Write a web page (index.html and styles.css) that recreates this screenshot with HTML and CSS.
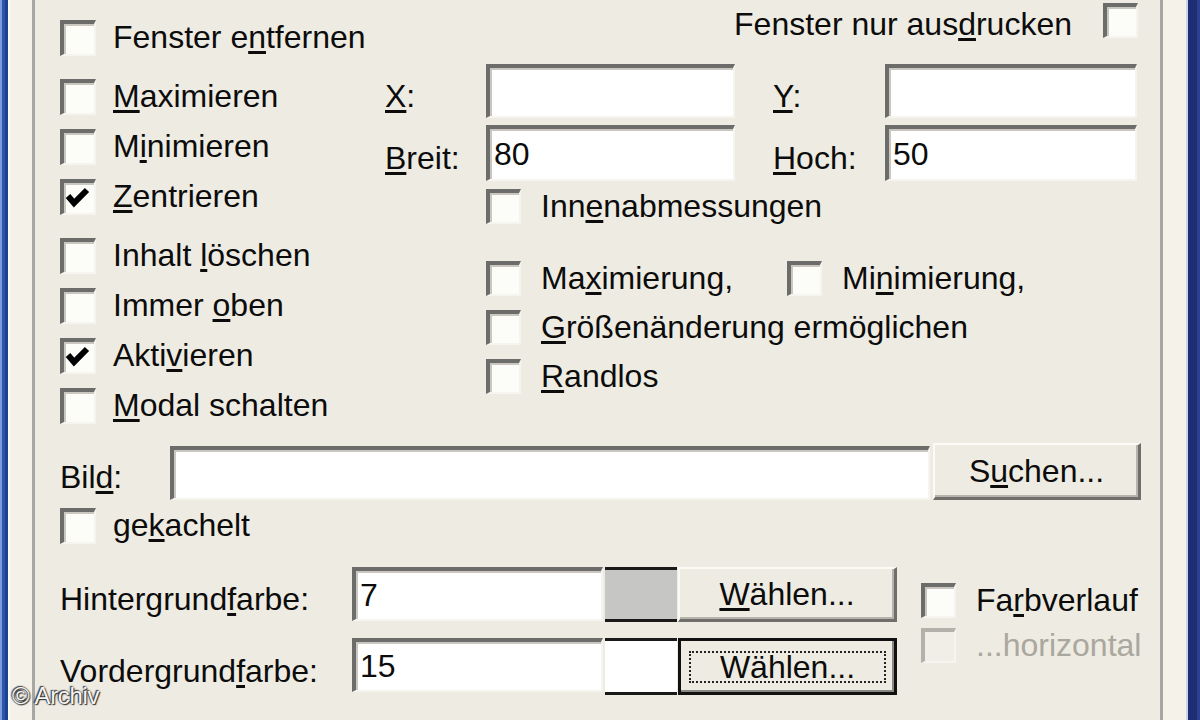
FILE: index.html
```html
<!DOCTYPE html>
<html lang="de">
<head>
<meta charset="utf-8">
<title>Fenster</title>
<link rel="stylesheet" href="styles.css">
</head>
<body>
<div class="window">
  <div class="frame-left"></div>
  <div class="dialog">
    <div class="top">
      <div class="col-left">
        <div class="cb"><span class="box"></span><span class="txt">Fenster e<u>n</u>tfernen</span></div>
        <div class="cb sep"><span class="box"></span><span class="txt"><u>M</u>aximieren</span></div>
        <div class="cb"><span class="box"></span><span class="txt">M<u>i</u>nimieren</span></div>
        <div class="cb"><span class="box"><svg class="check" viewBox="0 0 30 30"><polyline points="4,13 10,20 23,7"/></svg></span><span class="txt"><u>Z</u>entrieren</span></div>
        <div class="cb sep"><span class="box"></span><span class="txt">Inhalt <u>l</u>öschen</span></div>
        <div class="cb"><span class="box"></span><span class="txt">Immer <u>o</u>ben</span></div>
        <div class="cb"><span class="box"><svg class="check" viewBox="0 0 30 30"><polyline points="4,13 10,20 23,7"/></svg></span><span class="txt">Akti<u>v</u>ieren</span></div>
        <div class="cb"><span class="box"></span><span class="txt"><u>M</u>odal schalten</span></div>
      </div>
      <div class="col-right">
        <div class="print-row"><span class="txt">Fenster nur aus<u>d</u>rucken</span><span class="box"></span></div>
        <div class="xy-row first">
          <span class="lbl"><u>X</u>:</span><span class="field"></span>
          <span class="lbl lbl-y"><u>Y</u>:</span><span class="field"></span>
        </div>
        <div class="xy-row second">
          <span class="lbl"><u>B</u>reit:</span><span class="field">80</span>
          <span class="lbl lbl-y"><u>H</u>och:</span><span class="field">50</span>
        </div>
        <div class="cb r innen"><span class="box"></span><span class="txt">Inn<u>e</u>nabmessungen</span></div>
        <div class="pair">
          <div class="cb r wide"><span class="box"></span><span class="txt">Ma<u>x</u>imierung,</span></div>
          <div class="cb r"><span class="box"></span><span class="txt">Mi<u>n</u>imierung,</span></div>
        </div>
        <div class="cb r more"><span class="box"></span><span class="txt"><u>G</u>rößenänderung ermöglichen</span></div>
        <div class="cb r more"><span class="box"></span><span class="txt"><u>R</u>andlos</span></div>
      </div>
    </div>

    <div class="bild-row">
      <span class="lbl bild-lbl">Bil<u>d</u>:</span>
      <span class="field bild-field"></span>
      <span class="btn suchen">S<u>u</u>chen...</span>
    </div>
    <div class="cb gek"><span class="box"></span><span class="txt">ge<u>k</u>achelt</span></div>

    <div class="colors">
      <div class="color-rows">
        <div class="color-row">
          <span class="lbl color-lbl">Hintergrund<u>f</u>arbe:</span>
          <span class="field color-field">7</span>
          <span class="swatch grey"></span>
          <span class="btn waehlen"><span><u>W</u>ählen...</span></span>
        </div>
        <div class="color-row second">
          <span class="lbl color-lbl">Vordergrund<u>f</u>arbe:</span>
          <span class="field color-field">15</span>
          <span class="swatch white"></span>
          <span class="btn waehlen focused"><span class="focus">Wählen...</span></span>
        </div>
      </div>
      <div class="grad">
        <div class="cb r"><span class="box"></span><span class="txt">Fa<u>r</u>bverlauf</span></div>
        <div class="cb r disabled"><span class="box"></span><span class="txt">...horizontal</span></div>
      </div>
    </div>
  </div>
  <div class="frame-right"></div>
  <div class="watermark">© Archiv</div>
</div>
</body>
</html>
```

FILE: styles.css
```css
html, body {
  margin: 0;
  padding: 0;
}

body {
  width: 1200px;
  height: 720px;
  overflow: hidden;
  font-family: "Liberation Sans", Arial, sans-serif;
  font-size: 32px;
  color: #0c0c0c;
}

u {
  text-decoration: underline;
  text-decoration-thickness: 3px;
  text-underline-offset: 3px;
}

.window {
  position: relative;
  display: flex;
  width: 1200px;
  height: 720px;
  background: #eeebe2;
}

.frame-left {
  flex: none;
  width: 35px;
  background: linear-gradient(to right,
    #7f9bd8 0 2px,
    #2a56ad 2px 5px,
    #1c418f 5px 8px,
    #fbfaf4 8px 10px,
    #f4f1e8 10px 32px,
    #a7a7a3 32px 35px);
}

.frame-right {
  flex: none;
  width: 40px;
  background: linear-gradient(to right,
    #a5a5a1 0 3px,
    #f5f2ea 3px 26px,
    #c9d3ee 26px 28px,
    #1f2d74 28px 37px,
    #2b3f93 37px 40px);
}

.dialog {
  flex: 1;
  display: flex;
  flex-direction: column;
}

/* ---------- top area ---------- */
.top {
  display: grid;
  grid-template-columns: 350px 1fr;
  height: 443px;
}

.col-left {
  display: flex;
  flex-direction: column;
  gap: 14px;
  padding: 20px 0 0 25px;
}

.col-left .sep {
  margin-top: 9px;
}

.col-right {
  display: flex;
  flex-direction: column;
  padding-right: 22px;
}

/* ---------- checkbox ---------- */
.cb {
  display: flex;
  align-items: center;
  gap: 17px;
  height: 36px;
}

.cb.r {
  gap: 20px;
  height: 35px;
}

.box {
  flex: none;
  box-sizing: border-box;
  width: 36px;
  height: 36px;
  background: #fcfcf9;
  border-top: 4px solid #6c6c6a;
  border-left: 4px solid #6c6c6a;
  border-right: 2px solid #f6f4ee;
  border-bottom: 2px solid #f6f4ee;
  box-shadow: inset 2px 2px 0 #c9c7c0;
}

.cb.r .box {
  width: 35px;
  height: 35px;
}

.check {
  display: block;
  width: 30px;
  height: 30px;
}

.check polyline {
  fill: none;
  stroke: #000;
  stroke-width: 6;
  stroke-linecap: butt;
  stroke-linejoin: miter;
}

.txt {
  line-height: 36px;
  white-space: nowrap;
  position: relative;
  top: -1px;
}

/* ---------- right column rows ---------- */
.print-row {
  display: flex;
  justify-content: flex-end;
  align-items: center;
  gap: 31px;
  height: 35px;
  margin-top: 3px;
}

.print-row .txt {
  top: 3px;
}

.print-row .box {
  width: 35px;
  height: 35px;
}

.xy-row {
  display: grid;
  grid-template-columns: 101px 249px 150px 252px;
  align-items: center;
  height: 54px;
}

.xy-row.first {
  margin-top: 26px;
}

.xy-row.second {
  margin-top: 7px;
  height: 56px;
}

.lbl {
  white-space: nowrap;
  line-height: 36px;
}

.xy-row .lbl {
  padding-top: 10px;
}

.lbl-y {
  padding-left: 38px;
}

.field {
  box-sizing: border-box;
  height: 100%;
  background: #ffffff;
  border-top: 4px solid #6c6c6a;
  border-left: 4px solid #6c6c6a;
  border-right: 2px solid #f6f4ee;
  border-bottom: 2px solid #f6f4ee;
  box-shadow: inset 2px 2px 0 #c9c7c0;
  padding-left: 4px;
  display: flex;
  align-items: center;
  line-height: 36px;
}

.innen {
  margin-top: 8px;
  padding-left: 101px;
}

.pair {
  display: flex;
  margin-top: 37px;
  padding-left: 101px;
}

.pair .wide {
  width: 301px;
}

.more {
  margin-top: 14px;
  padding-left: 101px;
}

/* ---------- Bild ---------- */
.bild-row {
  display: flex;
  align-items: flex-end;
  height: 57px;
  padding-left: 25px;
}

.bild-lbl {
  width: 110px;
  align-self: center;
  padding-top: 10px;
}

.bild-field {
  width: 760px;
  height: 54px;
}

.btn {
  box-sizing: border-box;
  display: flex;
  align-items: center;
  justify-content: center;
  background: #eeebe2;
  border-top: 2px solid #fbfaf5;
  border-left: 2px solid #fbfaf5;
  border-right: 3px solid #6f6e6a;
  border-bottom: 3px solid #6f6e6a;
  box-shadow: inset -2px -2px 0 #b6b3aa;
  line-height: 36px;
  white-space: nowrap;
}

.suchen {
  width: 208px;
  height: 57px;
  margin-left: 3px;
}

.gek {
  margin-top: 8px;
  padding-left: 25px;
  height: 35px;
}

/* ---------- colors ---------- */
.colors {
  display: flex;
  margin-top: 24px;
  padding-left: 25px;
}

.color-rows {
  display: flex;
  flex-direction: column;
  gap: 16px;
}

.color-row {
  display: flex;
  align-items: stretch;
  height: 55px;
}

.color-row.second {
  height: 57px;
}

.color-lbl {
  width: 292px;
  align-self: center;
  padding-top: 8px;
}

.color-field {
  width: 251px;
  height: 54px;
}

.swatch {
  box-sizing: border-box;
  width: 72px;
  margin-left: 2px;
  border-top: 3px solid #1a1a1a;
  border-bottom: 3px solid #1a1a1a;
}

.swatch.grey {
  background: #c6c6c4;
}

.swatch.white {
  background: #ffffff;
}

.waehlen {
  width: 219px;
  margin-left: 1px;
}

.waehlen.focused {
  border: 3px solid #111;
  box-shadow: inset -2px -2px 0 #8a8882;
  padding: 0 8px;
}

.focus {
  flex: 1;
  box-sizing: border-box;
  height: 32px;
  border: 2px dotted #222;
  display: flex;
  align-items: center;
  justify-content: center;
}

.grad {
  display: flex;
  flex-direction: column;
  gap: 10px;
  margin-left: 24px;
  padding-top: 16px;
}

.disabled .box {
  background: #f0eee6;
  border-top-color: #b3b1aa;
  border-left-color: #b3b1aa;
  box-shadow: none;
}

.disabled .txt {
  color: #a9a79e;
}

/* ---------- watermark ---------- */
.watermark {
  position: absolute;
  left: 12px;
  top: 682px;
  font-family: "Liberation Sans", Arial, sans-serif;
  font-size: 24px;
  color: #f4f4f4;
  text-shadow: 0 0 2px #222, 1px 1px 1px #333, -1px -1px 1px #444;
  letter-spacing: -0.3px;
}
```
